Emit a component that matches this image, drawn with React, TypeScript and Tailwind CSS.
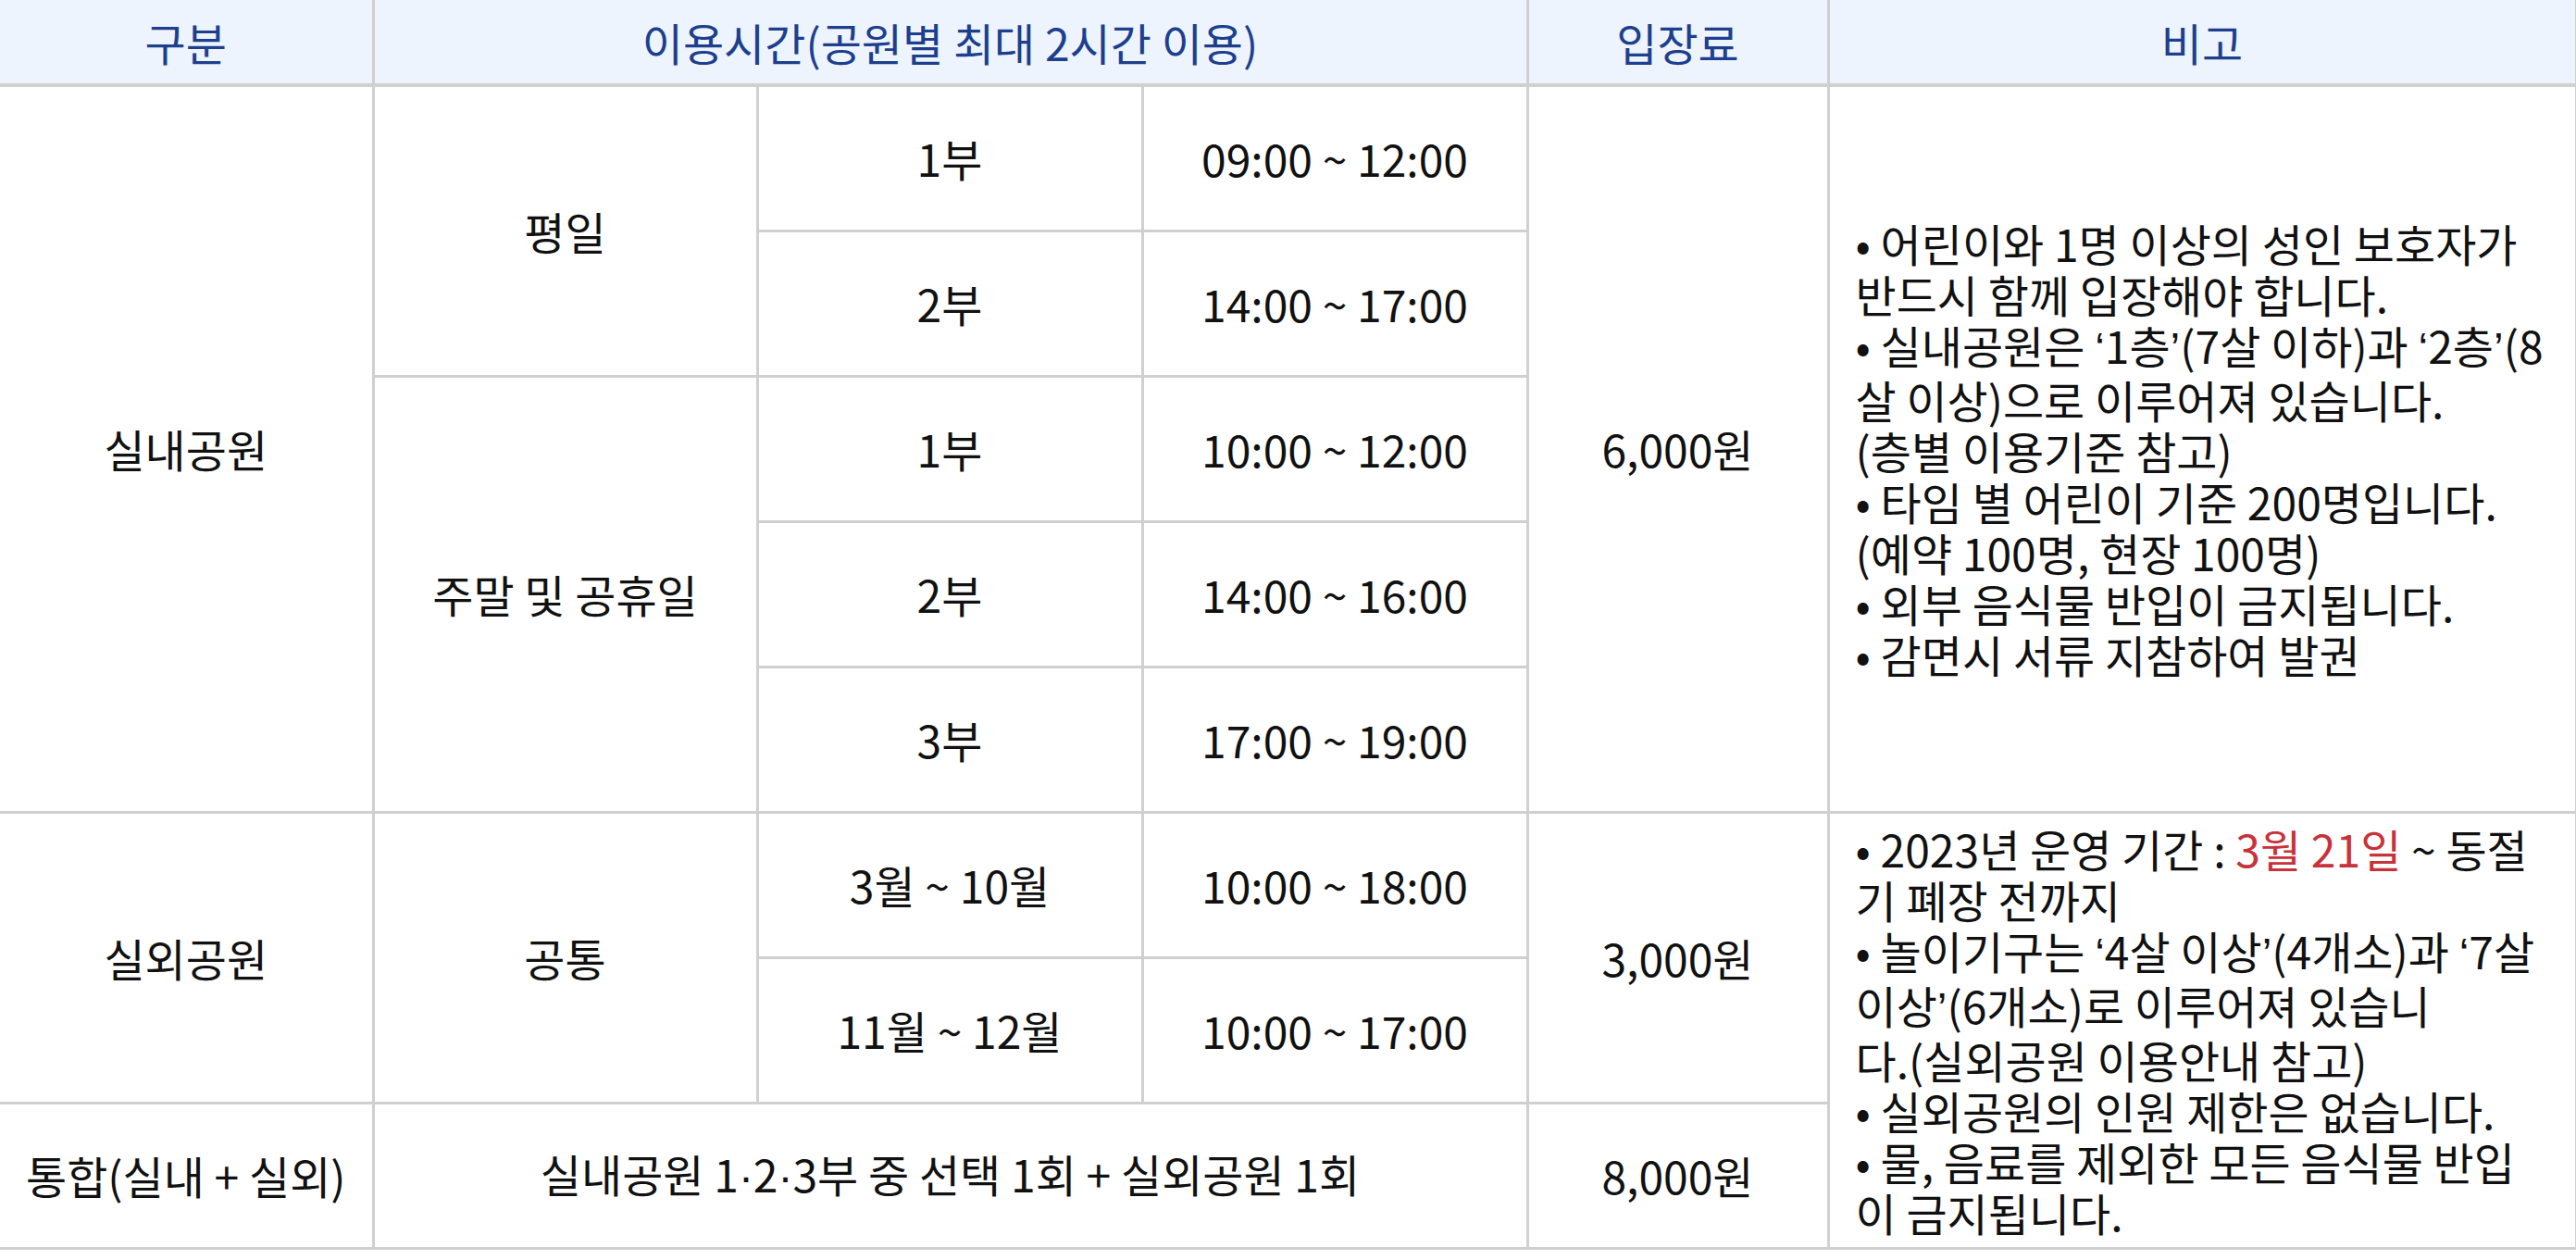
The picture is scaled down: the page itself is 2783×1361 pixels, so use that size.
import React from "react";

const cell =
  "border-[3px] border-[#d0d0d0] text-center align-middle text-[#111] whitespace-nowrap";
const head =
  "border-[3px] border-b-[4px] border-t-0 border-[#d0d0d0] bg-[#edf4fd] text-center align-middle text-[#1d3f8e] font-normal whitespace-nowrap";

function L({ children }: { children: React.ReactNode }) {
  return <span className="font-['Liberation_Sans',sans-serif]">{children}</span>;
}

export default function App() {
  return (
    <div className="w-[2783px] h-[1361px] bg-white font-['Noto_Sans_CJK_KR','Noto_Sans_CJK_KR',sans-serif] text-[48px] leading-[55px]">
      <table className="w-[2783px] table-fixed border-collapse">
        <colgroup>
          <col className="w-[403px]" />
          <col className="w-[415px]" />
          <col className="w-[416px]" />
          <col className="w-[416px]" />
          <col className="w-[325px]" />
          <col className="w-[808px]" />
        </colgroup>
        <thead>
          <tr className="h-[92px]">
            <th className={`${head} border-l-0`}>구분</th>
            <th className={head} colSpan={3}>
              이용시간(공원별 최대 2시간 이용)
            </th>
            <th className={head}>입장료</th>
            <th className={head}>비고</th>
          </tr>
        </thead>
        <tbody>
          <tr className="h-[157px]">
            <td className={`${cell} border-l-0`} rowSpan={5}>
              실내공원
            </td>
            <td className={cell} rowSpan={2}>
              평일
            </td>
            <td className={cell}>1부</td>
            <td className={cell}>09:00 ~ 12:00</td>
            <td className={cell} rowSpan={5}>
              6,000원
            </td>
            <td className={`${cell} text-left pl-[28px]`} rowSpan={5}>
              • 어린이와 1명 이상의 성인 보호자가
              <br />
              반드시 함께 입장해야 합니다.
              <br />• 실내공원은 <L>‘</L>1층<L>’</L>(7살 이하)과 <L>‘</L>2층<L>’</L>(8
              <br />살 이상)으로 이루어져 있습니다.
              <br />
              (층별 이용기준 참고)
              <br />• 타임 별 어린이 기준 200명입니다.
              <br />
              (예약 100명, 현장 100명)
              <br />• 외부 음식물 반입이 금지됩니다.
              <br />• 감면시 서류 지참하여 발권
            </td>
          </tr>
          <tr className="h-[157px]">
            <td className={cell}>2부</td>
            <td className={cell}>14:00 ~ 17:00</td>
          </tr>
          <tr className="h-[157px]">
            <td className={cell} rowSpan={3}>
              주말 및 공휴일
            </td>
            <td className={cell}>1부</td>
            <td className={cell}>10:00 ~ 12:00</td>
          </tr>
          <tr className="h-[157px]">
            <td className={cell}>2부</td>
            <td className={cell}>14:00 ~ 16:00</td>
          </tr>
          <tr className="h-[157px]">
            <td className={cell}>3부</td>
            <td className={cell}>17:00 ~ 19:00</td>
          </tr>
          <tr className="h-[157px]">
            <td className={`${cell} border-l-0`} rowSpan={2}>
              실외공원
            </td>
            <td className={cell} rowSpan={2}>
              공통
            </td>
            <td className={cell}>3월 ~ 10월</td>
            <td className={cell}>10:00 ~ 18:00</td>
            <td className={cell} rowSpan={2}>
              3,000원
            </td>
            <td className={`${cell} text-left pl-[28px]`} rowSpan={3}>
              • 2023년 운영 기간 :{" "}
              <span className="text-[#c8323a]">3월 21일</span> ~ 동절
              <br />기 폐장 전까지
              <br />• 놀이기구는 <L>‘</L>4살 이상<L>’</L>(4개소)과 <L>‘</L>7살
              <br />
              이상<L>’</L>(6개소)로 이루어져 있습니
              <br />
              다.(실외공원 이용안내 참고)
              <br />• 실외공원의 인원 제한은 없습니다.
              <br />• 물, 음료를 제외한 모든 음식물 반입
              <br />이 금지됩니다.
            </td>
          </tr>
          <tr className="h-[157px]">
            <td className={cell}>11월 ~ 12월</td>
            <td className={cell}>10:00 ~ 17:00</td>
          </tr>
          <tr className="h-[157px]">
            <td className={`${cell} border-l-0`}>통합(실내 + 실외)</td>
            <td className={cell} colSpan={3}>
              실내공원 1<L>·</L>2<L>·</L>3부 중 선택 1회 + 실외공원 1회
            </td>
            <td className={cell}>8,000원</td>
          </tr>
        </tbody>
      </table>
    </div>
  );
}
